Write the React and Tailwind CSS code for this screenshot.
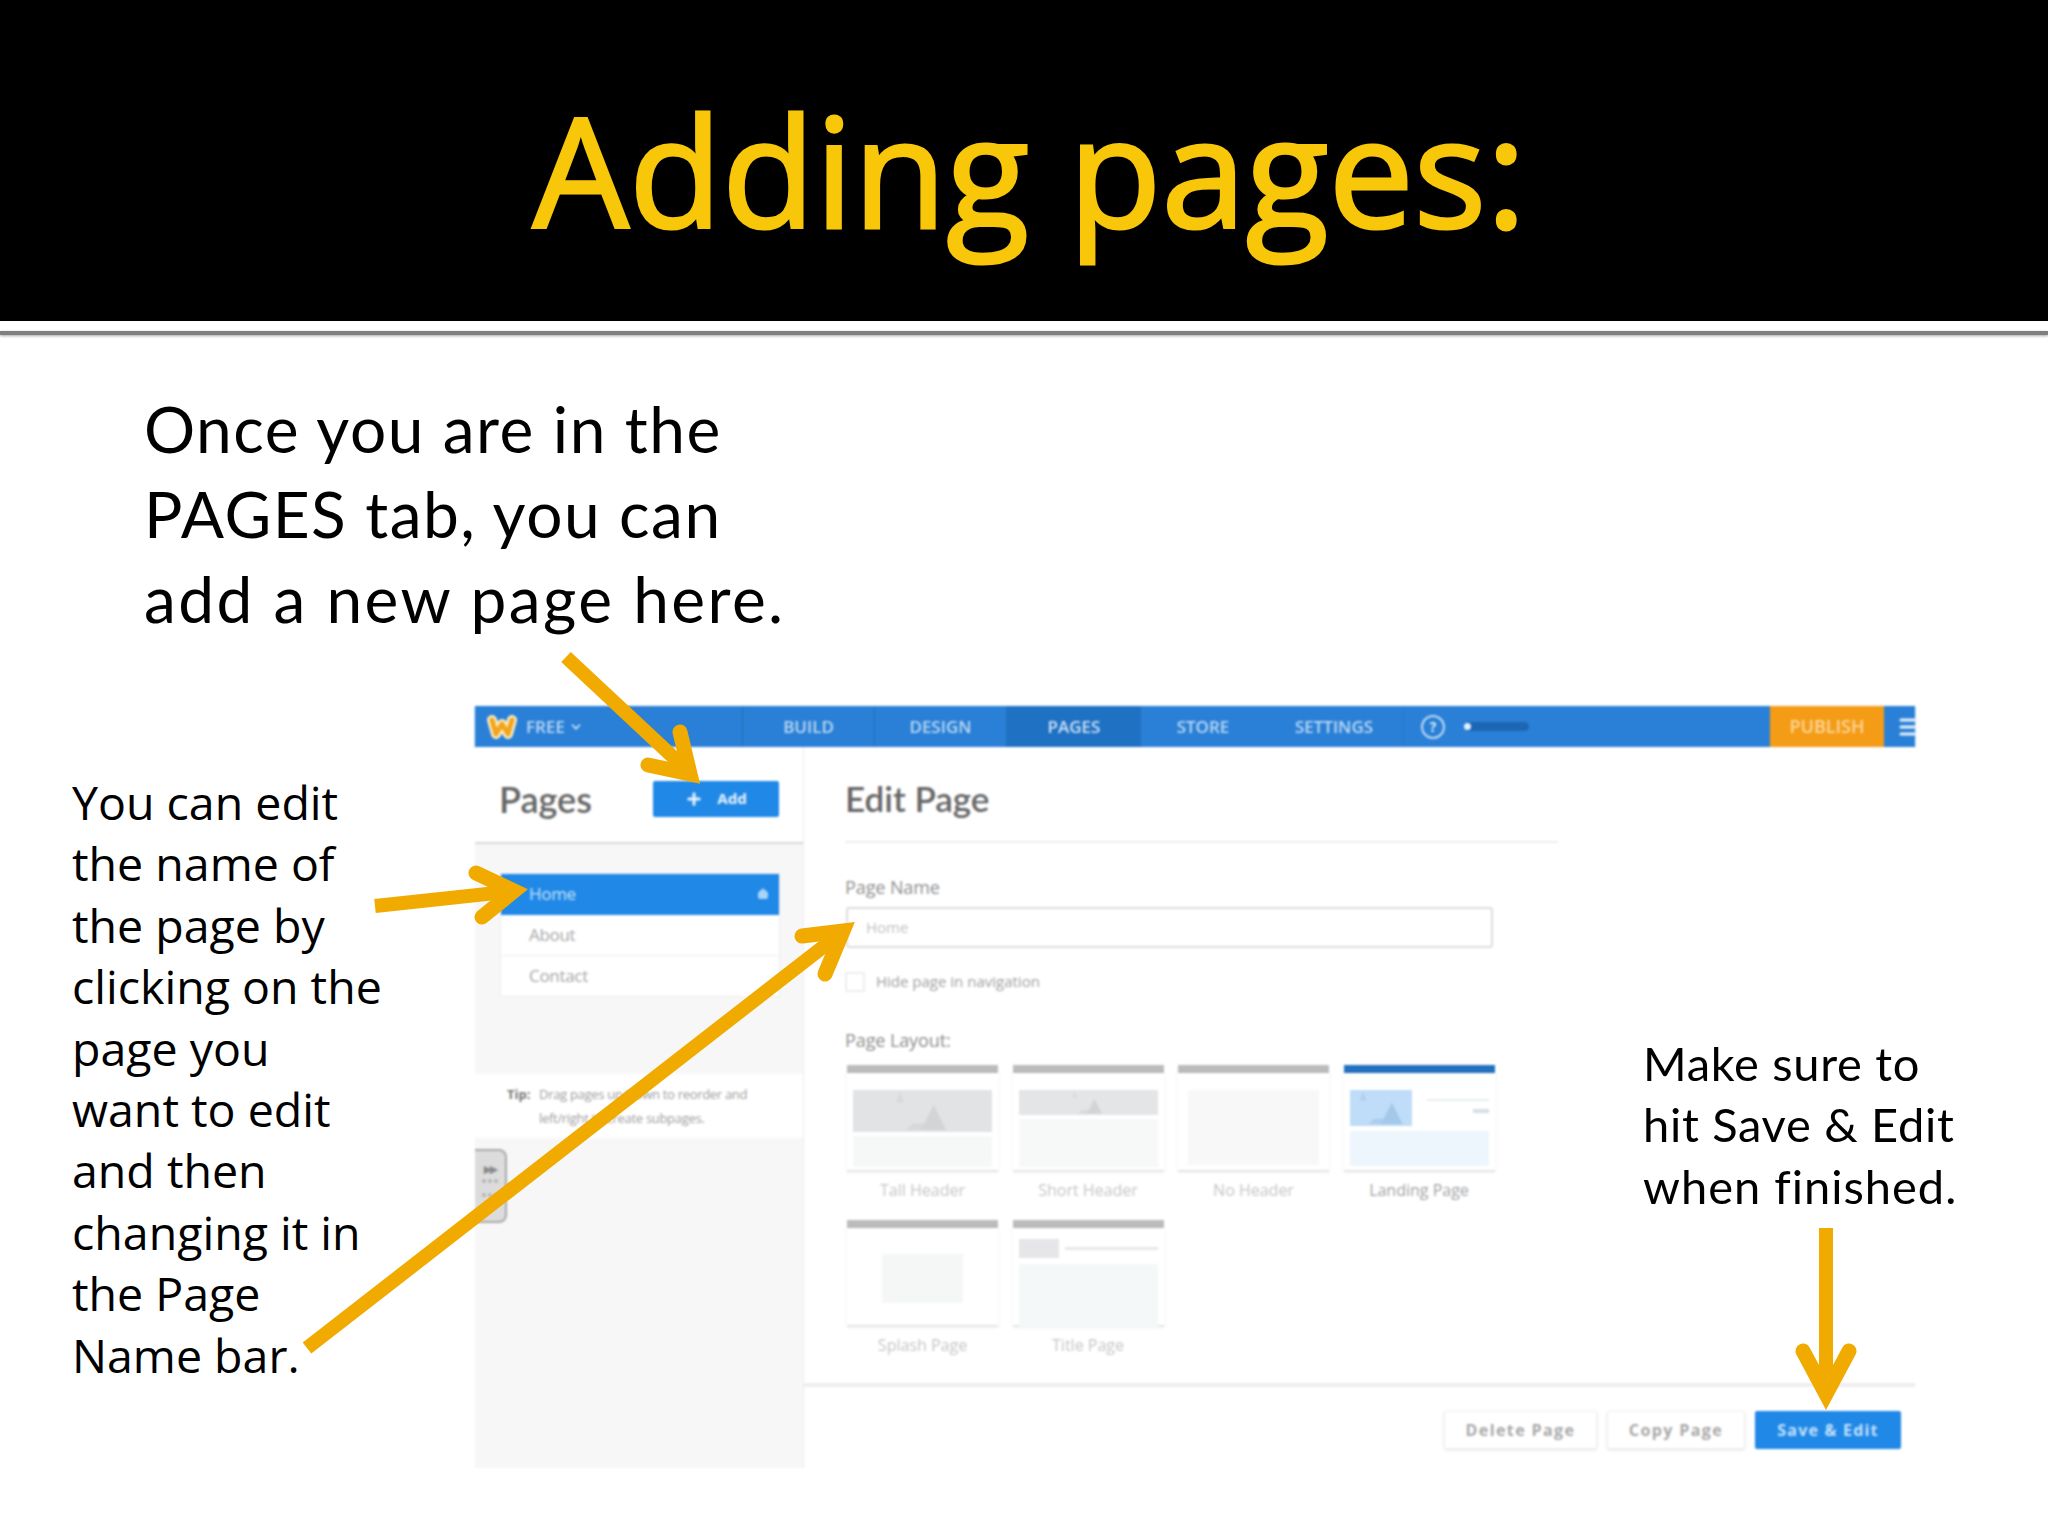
import React from 'react';
import { Plus, ChevronDown, Menu, Home as HomeIcon } from 'lucide-react';

const TABS = [
    { label: 'BUILD', w: 'w-[132px]', active: false },
    { label: 'DESIGN', w: 'w-[132px]', active: false },
    { label: 'PAGES', w: 'w-[134px]', active: true },
    { label: 'STORE', w: 'w-[124px]', active: false },
    { label: 'SETTINGS', w: 'w-[139px]', active: false },
];

function WeeblyLogo() {
    return (
        <svg width="30" height="26" viewBox="0 0 30 26">
            <path d="M5 6 L9 20 L15 10 L21 20 L25 6" fill="none" stroke="#fdeec8" strokeWidth="10" strokeLinejoin="round" strokeLinecap="round" />
            <path d="M5 6 L9 20 L15 10 L21 20 L25 6" fill="none" stroke="#f2a51c" strokeWidth="5" strokeLinejoin="round" strokeLinecap="round" />
        </svg>
    );
}

function Mountains({ className, fill }) {
    return (
        <svg className={className} viewBox="0 0 60 40">
            <path d="M6 12 L10 2 L14 12 Z" fill={fill} opacity="0.6" />
            <path d="M30 38 L42 14 L54 38 Z" fill={fill} />
            <path d="M16 38 L22 32 L32 32 L36 38 Z" fill={fill} opacity="0.7" />
        </svg>
    );
}

function TopBar() {
    return (
        <div className="flex h-[41px] bg-[#2a80d6] shadow-[0_1px_2px_rgba(42,128,214,0.5)]">
            <div className="flex w-[268px] items-center border-r border-[#2270bd] pl-[12px]">
                <WeeblyLogo />
                <span className="ml-[9px] text-[17px] font-semibold text-[#bcd9f5]">FREE</span>
                <ChevronDown className="ml-[4px] h-[14px] w-[14px] text-[#d5e8fa]" strokeWidth={3} />
            </div>
            {TABS.map((tab) => (
                <div
                    key={tab.label}
                    className={`${tab.w} flex items-center justify-center text-[17px] font-semibold ${tab.active ? 'bg-[#1f71c4] text-[#cfe3f7]' : 'text-[#bcd9f5]'} ${tab.label === 'BUILD' || tab.label === 'DESIGN' ? 'border-r border-[#2270bd]' : ''} ${tab.label === 'SETTINGS' ? 'border-r border-[#2878ca]' : ''}`}
                >
                    {tab.label}
                </div>
            ))}
            <div className="flex flex-1 items-center pl-[17px]">
                <div className="flex h-[24px] w-[24px] items-center justify-center rounded-full border-2 border-[#bcd9f5] text-[14px] font-bold text-[#e0eefb]">?</div>
                <div className="ml-[20px] h-[9px] w-[64px] rounded-full bg-[#1c66b3]">
                    <div className="ml-[-1px] mt-[1px] h-[7px] w-[7px] rounded-full bg-[#e6f3ff]" />
                </div>
            </div>
            <div className="flex w-[114px] items-center justify-center bg-[#f59c16] text-[18px] font-semibold text-[#fbd79d]">PUBLISH</div>
            <div className="flex w-[31px] items-center justify-end overflow-hidden">
                <Menu className="mr-[-6px] h-[24px] w-[24px] shrink-0 text-[#e8f2fc]" strokeWidth={3} />
            </div>
        </div>
    );
}

function Sidebar() {
    return (
        <aside className="flex w-[329px] flex-col border-r border-[#ececec] bg-[#f7f7f8]">
            <div className="flex h-[97px] items-center justify-between border-b-2 border-[#d8d8d8] bg-white pl-[24px] pr-[24px] pt-[8px]">
                <h2 className="font-['Lato',sans-serif] text-[36px] font-semibold text-[#666666]">Pages</h2>
                <button className="flex h-[36px] w-[126px] items-center justify-center gap-[14px] rounded-[2px] bg-[#2088e6] text-[15px] font-bold text-[#e6f2fd]">
                    <Plus className="h-[18px] w-[18px]" strokeWidth={4} />
                    Add
                </button>
            </div>
            <ul className="ml-[25px] mr-[23px] mt-[29px] border border-[#ececec] bg-white text-[17px] tracking-[-0.3px] text-[#a8a8a8]">
                <li className="flex h-[41px] items-center justify-between bg-[#2088e6] pb-[2px] pl-[28px] pr-[10px] text-[#c4e2fb]">
                    Home
                    <HomeIcon className="h-[12px] w-[12px] fill-[#a9d3f7] text-[#a9d3f7]" />
                </li>
                <li className="flex h-[41px] items-center border-b border-[#ececec] pl-[28px]">About</li>
                <li className="flex h-[40px] items-center pl-[28px]">Contact</li>
            </ul>
            <div className="mt-[77px] flex h-[64px] bg-white pl-[32px] pt-[8px] text-[13px] leading-[24px] text-[#a0a0a0]">
                <span className="w-[32px] font-bold text-[#777777]">Tip:</span>
                <p className="w-[225px] tracking-[-0.3px]">Drag pages up/down to reorder and left/right to create subpages.</p>
            </div>
            <div className="mt-[11px] flex h-[74px] w-[32px] flex-col items-center rounded-r-[8px] border-2 border-l-0 border-[#aaaaaa] bg-[#dcdcdc] pt-[10px] text-[15px] font-bold leading-[14px] text-[#8a8a8a]">
                <span className="tracking-[-2px]">▸▸</span>
                <span className="mt-[4px] h-[18px] w-[16px] border-y-4 border-dotted border-[#b4b4b4]" />
            </div>
        </aside>
    );
}

function Tile({ label, active, children, labelColor = 'text-[#c8c8c8]' }) {
    return (
        <div className="flex flex-col">
            <div className={`h-[8px] ${active ? 'bg-[#2270bf]' : 'bg-[#bcbcbe]'}`} />
            <div className="relative h-[99px] border-b-2 border-[#e4e4e4] bg-white px-[6px] pt-[17px] shadow-[0_0_6px_rgba(0,0,0,0.05)]">
                {children}
            </div>
            <div className={`mt-[6px] h-[42px] text-center text-[16px] ${labelColor}`}>{label}</div>
        </div>
    );
}

function EditPage() {
    return (
        <section className="flex flex-1 flex-col bg-white">
            <div className="pl-[41px]">
                <div className="flex h-[96px] w-[713px] items-center border-b-2 border-[#eeeeee] pt-[8px]">
                    <h2 className="font-['Lato',sans-serif] text-[35px] font-semibold text-[#666666]">Edit Page</h2>
                </div>
                <label className="mt-[32px] block text-[18px] leading-[24px] tracking-[-0.1px] text-[#8f8f8f]">Page Name</label>
                <div className="ml-[1px] mt-[8px] flex h-[41px] w-[647px] items-center rounded-[3px] border-2 border-[#dddddd] pl-[18px] text-[15px] text-[#c4c4c4]">Home</div>
                <div className="mt-[23px] flex h-[20px] items-center">
                    <span className="mt-[2px] h-[20px] w-[20px] rounded-[2px] border-2 border-[#eeeeee]" />
                    <span className="ml-[11px] text-[15px] text-[#a3a3a3]">Hide page in navigation</span>
                </div>
                <h3 className="mt-[37px] text-[18px] leading-[24px] tracking-[-0.1px] text-[#8f8f8f]">Page Layout:</h3>
                <div className="ml-[2px] mt-[13px] grid grid-cols-[repeat(4,151px)] gap-x-[14.5px] gap-y-[0px]">
                    <Tile label="Tall Header">
                        <div className="relative h-[42px] bg-[#e1e3e4]">
                            <Mountains className="absolute left-[35px] top-0 h-[42px] w-[66px]" fill="#d2d4d6" />
                        </div>
                        <div className="mt-[4px] h-[31px] bg-[#f6f8f8]" />
                    </Tile>
                    <Tile label="Short Header">
                        <div className="relative h-[25px] bg-[#e3e5e6]">
                            <Mountains className="absolute left-[40px] top-0 h-[25px] w-[56px]" fill="#d2d4d6" />
                        </div>
                        <div className="mt-[4px] h-[48px] bg-[#f7f8f8]" />
                    </Tile>
                    <Tile label="No Header">
                        <div className="mx-[4px] h-[75px] bg-[#f8f8f8]" />
                    </Tile>
                    <Tile label="Landing Page" active labelColor="text-[#a3a3a3]">
                        <div className="flex h-[36px]">
                            <div className="relative h-[36px] w-[62px] bg-[#bfddf8]">
                                <Mountains className="absolute left-[4px] top-0 h-[36px] w-[54px]" fill="#a3c8ea" />
                            </div>
                            <div className="ml-[15px] flex-1 pt-[9px]">
                                <div className="h-[2px] bg-[#e8eef3]" />
                                <div className="ml-auto mt-[8px] h-[4px] w-[16px] bg-[#d3dfe9]" />
                            </div>
                        </div>
                        <div className="mt-[5px] h-[35px] bg-[#eef6fd]" />
                    </Tile>
                    <Tile label="Splash Page">
                        <div className="mx-[29px] mt-[9px] h-[49px] bg-[#f5f7f7]" />
                    </Tile>
                    <Tile label="Title Page">
                        <div className="-mt-[6px] flex h-[19px] items-center">
                            <div className="h-[19px] w-[40px] bg-[#e6e6e8]" />
                            <div className="ml-[6px] h-[3px] flex-1 bg-[#e8e8e8]" />
                        </div>
                        <div className="mt-[6px] h-[64px] bg-[#f5f8f8]" />
                    </Tile>
                </div>
            </div>
            <div className="mt-auto flex h-[85px] justify-end gap-[10px] border-t-4 border-[#eeeeee] pr-[14px] pt-[24px]">
                <button className="h-[38px] w-[153px] rounded-[2px] border border-[#f0f0f0] text-[16px] font-bold tracking-[1.4px] text-[#a8a8a8] shadow-[0_1px_3px_rgba(0,0,0,0.12)]">Delete Page</button>
                <button className="h-[38px] w-[138px] rounded-[2px] border border-[#f0f0f0] text-[16px] font-bold tracking-[1.4px] text-[#a8a8a8] shadow-[0_1px_3px_rgba(0,0,0,0.12)]">Copy Page</button>
                <button className="h-[38px] w-[146px] rounded-[2px] bg-[#2088e6] text-[16px] font-bold tracking-[1.2px] text-[#c4e2fb]">Save &amp; Edit</button>
            </div>
        </section>
    );
}

function Arrows() {
    const amber = '#f0aa00';
    return (
        <svg className="pointer-events-none absolute left-0 top-0 h-[1536px] w-[2048px]" viewBox="0 0 2048 1536" fill="none" stroke={amber} strokeWidth="14">
            <path d="M566 657 L688 771" />
            <path d="M648 765 L690 774 L680 732" strokeLinecap="round" strokeWidth="15" />
            <path d="M375 906 L514 891" />
            <path d="M476 873 L514 891 L482 917" strokeLinecap="round" strokeWidth="15" />
            <path d="M307 1348 L841 933" />
            <path d="M802 936 L843 931 L825 974" strokeLinecap="round" strokeWidth="15" />
            <path d="M1826 1228 L1826 1393" />
            <path d="M1803 1351 L1826 1394 L1849 1351" strokeLinecap="round" strokeWidth="15" />
        </svg>
    );
}

export default function App() {
    return (
        <div className="relative h-[1536px] w-[2048px] overflow-hidden bg-white font-['Open_Sans',sans-serif]">
            {/* Title band */}
            <header className="flex h-[321px] items-center justify-center bg-black pl-[11px] pt-[18px]">
                <h1 className="text-[152px] font-normal leading-none text-[#f8c70a] [-webkit-text-stroke:3px_#f8c70a]">Adding pages:</h1>
            </header>
            <div className="mt-[10px] h-[4px] bg-[#808080] shadow-[0_1px_3px_rgba(0,0,0,0.35)]" />

            <div className="h-[371px] pl-[144px] pt-[51px] font-['Lato',sans-serif] text-[64px] leading-[85px] tracking-[1.5px] text-black">
                <p>Once you are in the</p>
                <p>PAGES tab, you can</p>
                <p className="tracking-[2.4px]">add a new page here.</p>
            </div>

            <div className="flex">
                <div className="w-[475px] pl-[72px] pt-[66px] text-[46.5px] leading-[61.4px] text-black">
                    <p>You can edit</p>
                    <p>the name of</p>
                    <p>the page by</p>
                    <p>clicking on the</p>
                    <p>page you</p>
                    <p>want to edit</p>
                    <p>and then</p>
                    <p>changing it in</p>
                    <p>the Page</p>
                    <p>Name bar.</p>
                </div>
                <div className="flex h-[762px] w-[1440px] flex-col blur-[1px]">
                    <TopBar />
                    <div className="flex flex-1">
                        <Sidebar />
                        <EditPage />
                    </div>
                </div>
            </div>

            <div className="absolute left-[1643px] top-[1033px] font-['Lato',sans-serif] text-[47px] leading-[61.4px] tracking-[0.7px] text-black">
                <p>Make sure to</p>
                <p>hit Save &amp; Edit</p>
                <p className="tracking-[1px]">when finished.</p>
            </div>

            <Arrows />
        </div>
    );
}
